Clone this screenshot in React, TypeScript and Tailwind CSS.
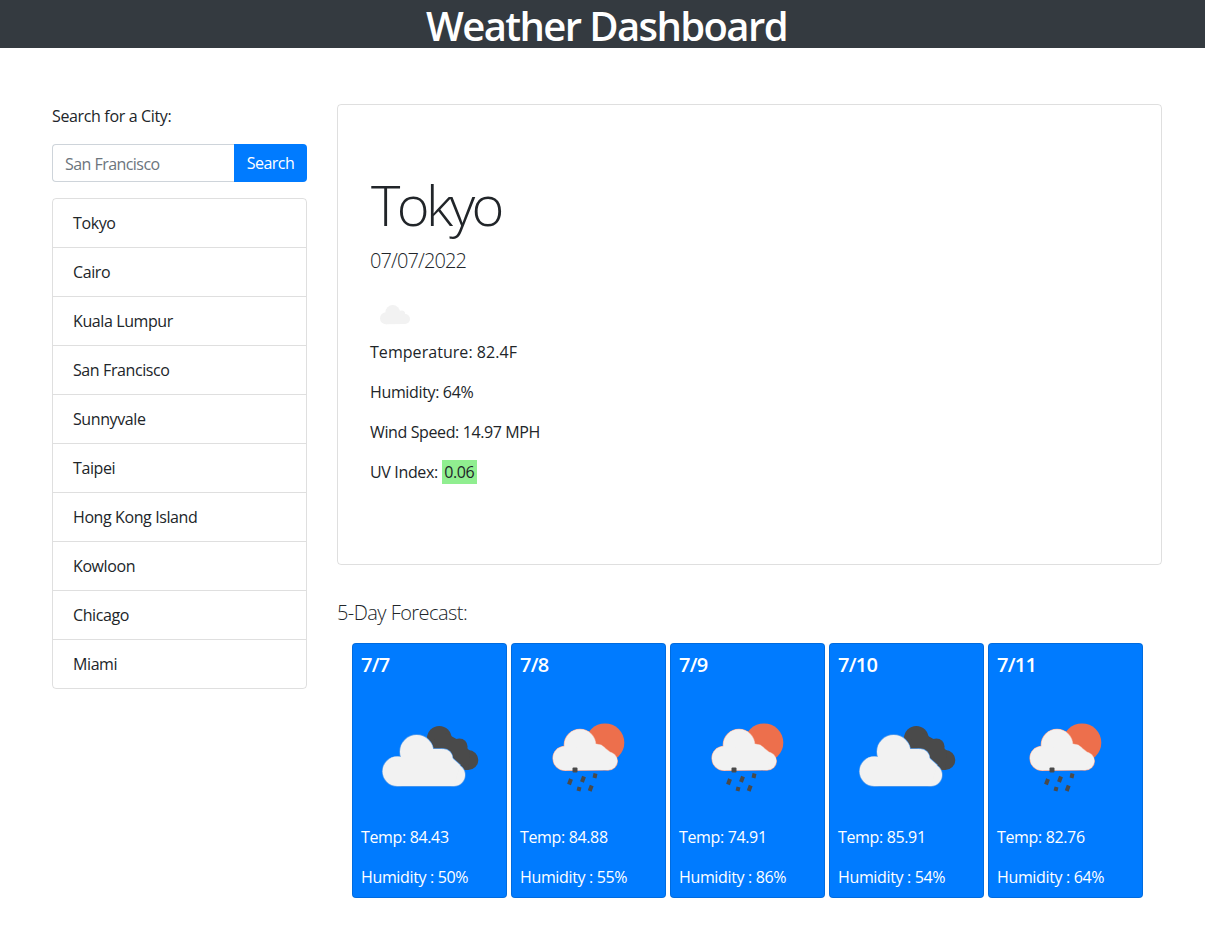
const cities = ["Tokyo","Cairo","Kuala Lumpur","San Francisco","Sunnyvale","Taipei","Hong Kong Island","Kowloon","Chicago","Miami"];
const days = [
  { d: "7/7", t: "84.43", h: "50%", k: "clouds" },
  { d: "7/8", t: "84.88", h: "55%", k: "rain" },
  { d: "7/9", t: "74.91", h: "86%", k: "rain" },
  { d: "7/10", t: "85.91", h: "54%", k: "clouds" },
  { d: "7/11", t: "82.76", h: "64%", k: "rain" },
];

function Lobes({ fill, stroke }: { fill: string; stroke?: string }) {
  const extra = stroke ? { stroke, strokeWidth: 1.4 } : {};
  return (
    <g fill={fill} {...extra}>
      <circle cx="17.300" cy="64.300" r="14.700" />
      <circle cx="36.700" cy="44.700" r="16.700" />
      <circle cx="63.300" cy="51.300" r="9.300" />
      <circle cx="74" cy="68" r="11" />
      <path d="M17 79 L17 56 L36 50 L48 42 L62 42 L80 58 L74 79 Z" />
    </g>
  );
}

function RainLobes({ fill, stroke }: { fill: string; stroke?: string }) {
  const extra = stroke ? { stroke, strokeWidth: 1.2 } : {};
  return (
    <g fill={fill} {...extra}>
      <circle cx="26" cy="51.300" r="12" />
      <circle cx="41" cy="38" r="15.700" />
      <circle cx="59.300" cy="46.300" r="8.300" />
      <circle cx="69.300" cy="54" r="9" />
      <path d="M26 63.300 L26 44 L41 40 L52 36 L62 38 L72 46 L69 63 Z" />
    </g>
  );
}

function Clouds() {
  return (
    <svg viewBox="0 0 100 100" className="w-[100px] h-[100px] blur-[0.5px]">
      <g fill="#4a4a4a">
        <circle cx="59.300" cy="31.300" r="12.300" />
        <circle cx="79.300" cy="39.700" r="8.300" />
        <circle cx="88.300" cy="53" r="10" />
        <path d="M50 36 L64 25 L80 34 L90 44 L88 63 L60 63 Z" />
      </g>
      <Lobes fill="#f2f2f2" stroke="#5b9fea" />
      <Lobes fill="#f2f2f2" />
    </svg>
  );
}

function Rain() {
  return (
    <svg viewBox="0 0 100 100" className="w-[100px] h-[100px] blur-[0.5px]">
      <circle cx="66" cy="35.700" r="19.300" fill="#ed6f4c" />
      <RainLobes fill="#f2f2f2" stroke="#f6a68f" />
      <RainLobes fill="#f2f2f2" />
      <rect x="33.500" y="60.500" width="5" height="5" rx="1" fill="#4a4a4a" />
      <g stroke="#4a4a4a" strokeWidth="4" strokeLinecap="butt">
        <path d="M45 69.500 L43 75" />
        <path d="M56.500 66.500 L55.500 71" />
        <path d="M32 72 L30 77.500" />
        <path d="M40.500 80 L39.500 84" />
        <path d="M52.700 78.500 L50.700 84" />
      </g>
    </svg>
  );
}

export default function App() {
  return (
    <div className="min-h-[942px] bg-white text-[#212529] font-['Open_Sans','Noto_Sans',sans-serif] text-base leading-6">
      <header className="h-12 bg-[#343a40] pt-1 pl-2 text-center text-white text-[40px] leading-[44px] font-semibold tracking-[-1.6px]">
        Weather Dashboard
      </header>
      <main className="flex gap-[30px] pl-[52px] pt-14">
        <aside className="w-[255px] shrink-0">
          <label className="block mb-4 tracking-[-0.35px]">Search for a City:</label>
          <div className="flex h-[38px] mb-4">
            <input
              placeholder="San Francisco"
              className="w-[182px] border border-[#ced4da] border-r-0 rounded-l px-3 pt-0.5 tracking-[-0.55px] placeholder:text-[#6c757d] outline-none"
            />
            <button className="w-[73px] bg-[#007bff] text-white rounded-r tracking-[-0.5px]">Search</button>
          </div>
          <ul className="border border-black/[.125] rounded">
            {cities.map((c, i) => (
              <li key={c} className={`px-5 flex items-center tracking-[-0.4px] ${i ? "h-[49px] border-t border-black/[.125]" : "h-12"}`}>
                {c}
              </li>
            ))}
          </ul>
        </aside>
        <section className="w-[825px] shrink-0">
          <div className="border border-black/[.125] rounded px-8 py-16">
            <h1 className="pt-0.5 pl-px text-[56px] leading-[67px] font-light mb-2 tracking-[-3.6px]">Tokyo</h1>
            <p className="text-xl leading-[30px] font-light mb-[14px] tracking-[-0.9px]">07/07/2022</p>
            <svg viewBox="0 0 50 50" className="w-[50px] h-[50px] blur-[0.3px]">
              <g fill="#f2f2f2">
                <circle cx="16" cy="28.300" r="6" />
                <circle cx="22.700" cy="22.300" r="7.300" />
                <circle cx="31.700" cy="24" r="3.500" />
                <circle cx="35" cy="29" r="5" />
                <path d="M16 34.300 L16 24 L35 24 L35 34 Z" />
              </g>
            </svg>
            <p className="mb-4 tracking-[0.05px]">Temperature: 82.4F</p>
            <p className="mb-4 tracking-[-0.35px]">Humidity: 64%</p>
            <p className="mb-4 tracking-[-0.38px]">Wind Speed: 14.97 MPH</p>
            <p className="mb-4 tracking-[-0.35px]">
              UV Index: <span className="bg-[#90ee90] inline-block px-[2.5px]">0.06</span>
            </p>
          </div>
          <h2 className="mt-[33px] mb-[15px] text-xl leading-[30px] font-light tracking-[-0.55px]">5-Day Forecast:</h2>
          <div className="flex gap-1 pl-[15px]">
            {days.map((x) => (
              <div key={x.d} className="w-[155px] h-[255px] rounded bg-[#007bff] border border-black/[.125] text-white px-2 pt-[9px]">
                <h5 className="text-xl leading-6 font-semibold tracking-[-0.7px]">{x.d}</h5>
                <div className="flex justify-center mt-[30px] mb-[18px]">
                  {x.k === "clouds" ? <Clouds /> : <Rain />}
                </div>
                <p className="mb-4 tracking-[-0.35px]">Temp: {x.t}</p>
                <p className="tracking-[-0.35px]">Humidity : {x.h}</p>
              </div>
            ))}
          </div>
        </section>
      </main>
    </div>
  );
}
